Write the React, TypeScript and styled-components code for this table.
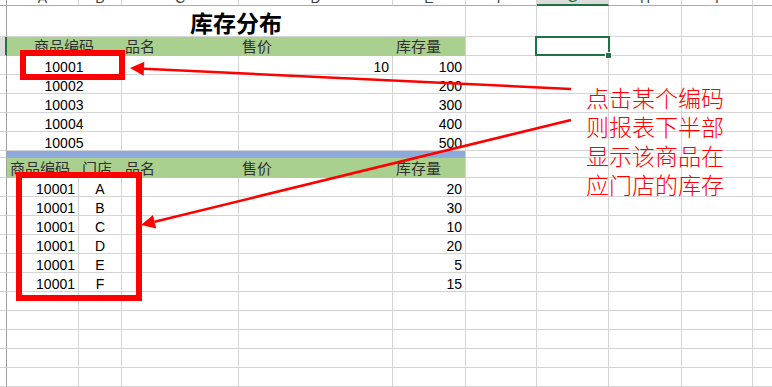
import React from 'react'
import styled, { createGlobalStyle, css } from 'styled-components'

const LINE = '#d4d4d4'
const GREEN = '#a9d08e'
const BLUE = '#8ea9db'
const EXCEL = '#217346'
const RED = '#ff0000'

const COLS = [72, 43, 117, 154, 73, 71, 72, 73, 71, 72] // A..J
const LETTERS = 'ABCDEFGHIJ'.split('')

type Align = 'left' | 'center' | 'right'
type Kind = 'data' | 'head' | 'title'

type CellSpec = { text?: string; span?: number; align?: Align; kind?: Kind }
type RowSpec = { height: number; fill?: string; active?: boolean; cells: CellSpec[] }

const head = (text: string, extra: Partial<CellSpec> = {}): CellSpec => ({
  text,
  kind: 'head',
  ...extra,
})

const upper = [
  ['10001', '10', '100'],
  ['10002', '', '200'],
  ['10003', '', '300'],
  ['10004', '', '400'],
  ['10005', '', '500'],
]

const lower = [
  ['A', '20'],
  ['B', '30'],
  ['C', '10'],
  ['D', '20'],
  ['E', '5'],
  ['F', '15'],
]

const rows: RowSpec[] = [
  {
    height: 31,
    cells: [{ text: '库存分布', span: 5, align: 'center', kind: 'title' }],
  },
  {
    height: 19,
    fill: GREEN,
    active: true,
    cells: [
      head('商品编码', { span: 2, align: 'center' }),
      head('品名'),
      head('售价'),
      head('库存量'),
    ],
  },
  ...upper.map(([code, price, stock]) => ({
    height: 19,
    cells: [
      { text: code, span: 2, align: 'center' as Align },
      {},
      { text: price, align: 'right' as Align },
      { text: stock, align: 'right' as Align },
    ],
  })),
  { height: 7, fill: BLUE, cells: [{}, {}, {}, {}, {}] },
  {
    height: 20,
    fill: GREEN,
    cells: [head('商品编码'), head('门店'), head('品名'), head('售价'), head('库存量')],
  },
  ...lower.map(([store, qty]) => ({
    height: 19,
    cells: [
      { text: '10001', align: 'right' as Align },
      { text: store, align: 'center' as Align },
      {},
      {},
      { text: qty, align: 'right' as Align },
    ],
  })),
  ...Array.from({ length: 5 }, () => ({ height: 19, cells: [] })),
]

const NOTE = ['点击某个编码', '则报表下半部', '显示该商品在', '应门店的库存']

const arrowHead = (x1: number, y1: number, x2: number, y2: number, len = 14, half = 7) => {
  const dx = x1 - x2
  const dy = y1 - y2
  const d = Math.hypot(dx, dy)
  const ux = dx / d
  const uy = dy / d
  const bx = x2 + ux * len
  const by = y2 + uy * len
  return {
    back: [bx, by],
    points: `${x2},${y2} ${bx - uy * half},${by + ux * half} ${bx + uy * half},${by - ux * half}`,
  }
}

const ARROWS = [
  [571, 89, 130, 68],
  [571, 120, 141, 225],
]

export default function App() {
  let r = 0
  return (
    <Page>
      <GlobalStyle />
      <Sheet $rows={[6, ...rows.map((row) => row.height)]}>
        <Corner />
        {LETTERS.map((l) => (
          <ColHead key={l} $active={l === 'G'}>
            {l}
          </ColHead>
        ))}
        {rows.map((row, ri) => {
          r = ri
          let col = 0
          const given = row.cells.map((c) => {
            const start = col
            col += c.span ?? 1
            return { ...c, start, fill: row.fill, edge: col === 5 }
          })
          const rest = Array.from({ length: COLS.length - col }, (_, i) => ({
            start: col + i,
          }))
          return (
            <React.Fragment key={ri}>
              <RowHead $active={row.active} />
              {given.map((c) => (
                <Cell
                  key={c.start}
                  $span={c.span ?? 1}
                  $align={c.align ?? 'left'}
                  $kind={c.kind ?? 'data'}
                  $fill={c.fill}
                  $edge={c.edge}
                >
                  {c.text}
                </Cell>
              ))}
              {rest.map((c) => (
                <Cell
                  key={c.start}
                  $span={1}
                  $align="left"
                  $kind="data"
                  $selected={r === 1 && c.start === 6}
                />
              ))}
            </React.Fragment>
          )
        })}
      </Sheet>

      <RedBox $x={20} $y={50} $w={105} $h={30} />
      <RedBox $x={16} $y={172} $w={126} $h={129} />

      <Arrows width="772" height="387" viewBox="0 0 772 387">
        {ARROWS.map(([x1, y1, x2, y2], i) => {
          const { back, points } = arrowHead(x1, y1, x2, y2)
          return (
            <g key={i}>
              <line x1={x1} y1={y1} x2={back[0]} y2={back[1]} stroke={RED} strokeWidth="2.5" />
              <polygon points={points} fill={RED} />
            </g>
          )
        })}
      </Arrows>

      <Note>
        {NOTE.map((line) => (
          <NoteLine key={line}>{line}</NoteLine>
        ))}
      </Note>
    </Page>
  )
}

const GlobalStyle = createGlobalStyle`
  html, body {
    margin: 0;
    padding: 0;
    background: #fff;
  }
  body {
    font-family: 'Liberation Sans', 'Noto Sans CJK SC', sans-serif;
    color: #000;
  }
`

const Page = styled.div`
  position: relative;
  width: 772px;
  height: 387px;
  overflow: hidden;
  background: #fff;
`

const Sheet = styled.div<{ $rows: number[] }>`
  display: grid;
  grid-template-columns: 7px ${COLS.map((w) => `${w}px`).join(' ')};
  grid-template-rows: ${({ $rows }) => $rows.map((h) => `${h}px`).join(' ')};
`

const Corner = styled.div`
  box-sizing: border-box;
  border-right: 1px solid #9f9f9f;
  border-bottom: 1px solid #ababab;
`

const ColHead = styled.div<{ $active?: boolean }>`
  box-sizing: border-box;
  display: flex;
  align-items: flex-end;
  justify-content: center;
  overflow: hidden;
  font-size: 14px;
  line-height: 14px;
  color: #444;
  border-right: 1px solid ${LINE};
  border-bottom: 1px solid #ababab;

  ${({ $active }) =>
    $active &&
    css`
      background: #dcdcdc;
      color: ${EXCEL};
      border-bottom: 2px solid ${EXCEL};
    `}
`

const RowHead = styled.div<{ $active?: boolean }>`
  box-sizing: border-box;
  border-right: 1px solid #9f9f9f;
  border-bottom: 1px solid ${LINE};

  ${({ $active }) =>
    $active &&
    css`
      background: #dcdcdc;
      border-right: 2px solid ${EXCEL};
    `}
`

const Cell = styled.div<{
  $span: number
  $align: Align
  $kind: Kind
  $fill?: string
  $edge?: boolean
  $selected?: boolean
}>`
  position: relative;
  box-sizing: border-box;
  grid-column: span ${({ $span }) => $span};
  display: flex;
  align-items: flex-end;
  justify-content: ${({ $align }) =>
    $align === 'center' ? 'center' : $align === 'right' ? 'flex-end' : 'flex-start'};
  padding: 0 3px;
  white-space: nowrap;
  font-size: 14px;
  line-height: 14px;
  background: ${({ $fill }) => $fill ?? 'transparent'};
  border-right: 1px solid ${({ $fill, $edge }) => ($fill && !$edge ? $fill : LINE)};
  border-bottom: 1px solid ${({ $fill }) => $fill ?? LINE};

  ${({ $kind }) =>
    $kind === 'head' &&
    css`
      font-family: 'Noto Sans CJK SC', sans-serif;
      font-size: 15px;
      line-height: 18px;
      color: #303030;
    `}

  ${({ $kind }) =>
    $kind === 'title' &&
    css`
      font-family: 'Noto Sans CJK SC', sans-serif;
      font-size: 23px;
      font-weight: 700;
      line-height: 28px;
    `}

  ${({ $selected }) =>
    $selected &&
    css`
      &::after {
        content: '';
        position: absolute;
        left: -2px;
        top: -1px;
        right: -2px;
        bottom: -1px;
        border: 2px solid ${EXCEL};
      }
      &::before {
        content: '';
        position: absolute;
        right: -3px;
        bottom: -3px;
        width: 5px;
        height: 5px;
        background: ${EXCEL};
        outline: 1px solid #fff;
        z-index: 1;
      }
    `}
`

const RedBox = styled.div<{ $x: number; $y: number; $w: number; $h: number }>`
  position: absolute;
  left: ${({ $x }) => $x}px;
  top: ${({ $y }) => $y}px;
  width: ${({ $w }) => $w}px;
  height: ${({ $h }) => $h}px;
  box-sizing: border-box;
  border: 6px solid ${RED};
`

const Arrows = styled.svg`
  position: absolute;
  left: 0;
  top: 0;
  pointer-events: none;
`

const Note = styled.div`
  position: absolute;
  left: 586px;
  top: 83px;
  display: flex;
  flex-direction: column;
  font-family: 'Noto Sans CJK SC', sans-serif;
  font-size: 23px;
  font-weight: 300;
  line-height: 29px;
  color: ${RED};
`

const NoteLine = styled.div`
  white-space: nowrap;
`
